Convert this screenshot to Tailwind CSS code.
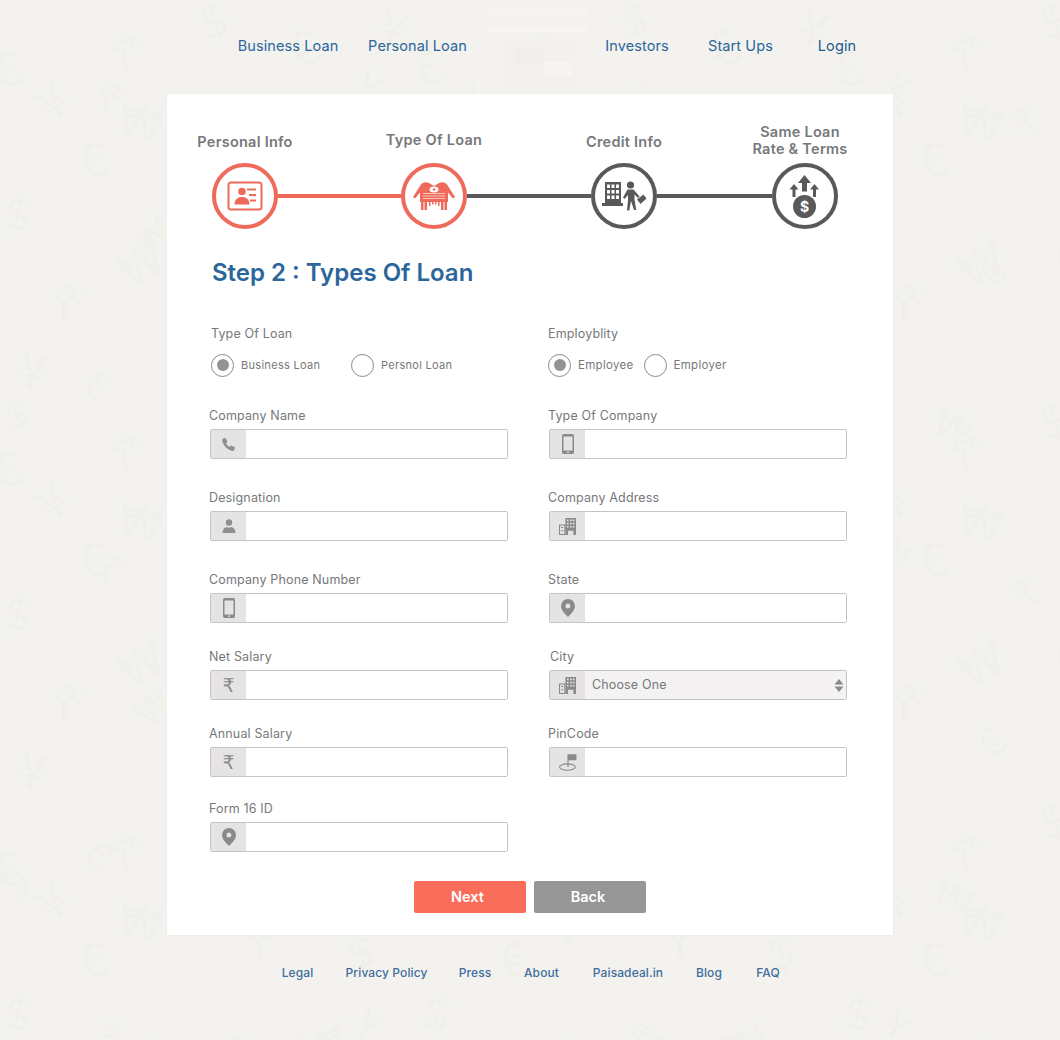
<!DOCTYPE html>
<html lang="en">
<head>
<meta charset="utf-8">
<title>Step 2 : Types Of Loan</title>
<script src="https://cdn.jsdelivr.net/npm/@tailwindcss/browser@4"></script>
</head>
<body class="relative h-[1040px] w-[1060px] overflow-hidden bg-[#f3f2ee] font-['Inter','Liberation_Sans',sans-serif] text-[#77787b]">

<svg class="absolute inset-0" width="1060" height="1040" aria-hidden="true">
  <defs>
    <pattern id="money" width="420" height="400" patternUnits="userSpaceOnUse">
      <g fill="#f0efea" font-family="DejaVu Sans" font-size="46">
        <text transform="translate(0,90) rotate(-20)">€</text>
        <text transform="translate(105,60) rotate(25)">₹</text>
        <text transform="translate(115,135) rotate(10)">₩</text>
        <text transform="translate(50,125) rotate(-35)">¥</text>
        <text transform="translate(0,225) rotate(15)">$</text>
        <text transform="translate(85,180) rotate(-15)">€</text>
        <text transform="translate(45,310) rotate(30)">₹</text>
        <text transform="translate(130,290) rotate(-30)">₩</text>
        <text transform="translate(15,385) rotate(12)">¥</text>
        <text transform="translate(205,40) rotate(-18)">$</text>
        <text transform="translate(240,150) rotate(22)">₹</text>
        <text transform="translate(300,70) rotate(-28)">€</text>
        <text transform="translate(375,40) rotate(16)">¥</text>
        <text transform="translate(350,170) rotate(-12)">$</text>
        <text transform="translate(210,260) rotate(30)">€</text>
        <text transform="translate(310,270) rotate(-22)">₩</text>
        <text transform="translate(385,310) rotate(18)">€</text>
        <text transform="translate(225,370) rotate(-10)">$</text>
        <text transform="translate(320,385) rotate(26)">¥</text>
      </g>
    </pattern>
    <pattern id="money2" x="60" y="30" width="530" height="470" patternUnits="userSpaceOnUse">
      <g fill="#f0efea" font-family="DejaVu Sans" font-size="38">
        <text transform="translate(30,70) rotate(40)">₹</text>
        <text transform="translate(160,100) rotate(-40)">$</text>
        <text transform="translate(290,60) rotate(35)">¥</text>
        <text transform="translate(430,110) rotate(-25)">₹</text>
        <text transform="translate(90,230) rotate(-45)">₩</text>
        <text transform="translate(265,215) rotate(40)">$</text>
        <text transform="translate(400,260) rotate(-35)">€</text>
        <text transform="translate(20,360) rotate(35)">€</text>
        <text transform="translate(180,350) rotate(-30)">₹</text>
        <text transform="translate(340,400) rotate(30)">₩</text>
        <text transform="translate(480,400) rotate(-20)">$</text>
      </g>
    </pattern>
  </defs>
  <rect width="1060" height="1040" fill="url(#money)"/>
  <rect width="1060" height="1040" fill="url(#money2)"/>
  <g>
    <rect x="488" y="9" width="100" height="6" fill="#f5f4f1"/>
    <rect x="488" y="28" width="100" height="4" fill="#f6f5f2"/>
    <rect x="505" y="36" width="75" height="54" fill="#f2f1ed"/>
    <rect x="516" y="48" width="28" height="17" fill="#efeeea"/>
    <rect x="544" y="62" width="28" height="14" fill="#f6f5f1"/>
  </g>
</svg>

<div class="relative">
  <nav class="flex h-[94px] items-start pt-[37px] pl-[237px] text-[14.5px] leading-[18px] tracking-[0.1px] text-[#2b669b]">
    <a class="w-[102px] whitespace-nowrap text-center">Business Loan</a>
    <a class="ml-[28px] w-[101px] whitespace-nowrap text-center">Personal Loan</a>
    <a class="ml-[136px] w-[66px] whitespace-nowrap text-center">Investors</a>
    <a class="ml-[37px] w-[67px] whitespace-nowrap text-center">Start Ups</a>
    <a class="ml-[43px] w-[40px] whitespace-nowrap text-center text-[#1f5a8f]">Login</a>
  </nav>

  <main class="ml-[167px] h-[841px] w-[726px] bg-white pt-[29px] shadow-[0_0_0_1px_#efeeeb]">
    <div class="flex pl-[18px] text-center text-[14.5px] leading-[17px] font-semibold tracking-[0.25px] text-[#77787b]">
      <div class="flex h-[36px] w-[120px] items-center justify-center">Personal Info</div>
      <div class="ml-[69px] -mt-[2px] flex h-[36px] w-[120px] items-center justify-center">Type Of Loan</div>
      <div class="ml-[70px] flex h-[36px] w-[120px] items-center justify-center">Credit Info</div>
      <div class="ml-[56px] -mt-[1px] flex h-[36px] w-[120px] items-center justify-center">Same Loan<br>Rate &amp; Terms</div>
    </div>

    <div class="mt-[4px] flex items-center pl-[45px]">
      <svg width="66" height="66" viewBox="0 0 66 66" class="shrink-0">
        <circle cx="33" cy="33" r="31" fill="#fff" stroke="#ee6a5a" stroke-width="4"/>
        <rect x="16.500" y="19.500" width="33" height="27" rx="2.500" fill="none" stroke="#ee6a5a" stroke-width="2"/>
        <circle cx="30" cy="28.500" r="3.800" fill="#ee6a5a"/>
        <path d="M22.500 41.500c0-5 3-7.500 7.500-7.500s7.500 2.500 7.500 7.500z" fill="#ee6a5a"/>
        <path d="M35 26.500h9M37 32h7M38 37.500h6" stroke="#ee6a5a" stroke-width="2"/>
      </svg>
      <div class="h-[4px] w-[123px] bg-[#ee6a5a]"></div>
      <svg width="66" height="66" viewBox="0 0 66 66" class="shrink-0">
        <circle cx="33" cy="33" r="31" fill="#fff" stroke="#ee6a5a" stroke-width="4"/>
        <path d="M12 34 20 21.500Q23 18 28 20L33 23 38 20Q43 18 46 21.500L54 34 52 35.500 47 29.500V39H19V29.500L14 35.500z" fill="#ee6a5a"/>
        <path d="M20 38h2.500v9H20zM23.500 38H26v9h-2.500zM28 38h1.500v5H28zM31 38h1.500v3.500H31zM34 38h1.500v3.500H34zM37 38h1.500v5H37zM40 38h2.500v9H40zM43.500 38H46v9h-2.500z" fill="#ee6a5a"/>
        <path d="M22 30.500h22M22 33h22M22 35.500h22" stroke="#fbc4bb" stroke-width="1.100"/>
        <ellipse cx="33" cy="26.500" rx="4.500" ry="3" fill="#fff"/>
        <circle cx="33" cy="26.500" r="1.300" fill="#ee6a5a"/>
      </svg>
      <div class="h-[4px] w-[124px] bg-[#58595b]"></div>
      <svg width="66" height="66" viewBox="0 0 66 66" class="shrink-0">
        <circle cx="33" cy="33" r="31" fill="#fff" stroke="#58595b" stroke-width="4"/>
        <path d="M14 19h16v21h2v3H11v-3h3z" fill="#58595b"/>
        <path d="M16 21.500h3v3.500h-3zM20.500 21.500h3v3.500h-3zM25 21.500h3v3.500h-3zM16 27h3v3.500h-3zM20.500 27h3v3.500h-3zM25 27h3v3.500h-3zM16 32.500h3v3.500h-3zM20.500 32.500h3v3.500h-3zM25 32.500h3v3.500h-3z" fill="#fff"/>
        <circle cx="39.500" cy="22" r="3.600" fill="#58595b"/>
        <path d="M36.500 26.500h6l6 7-1.500 1.500-3.500-3.500v5l1.800 10.500h-2.300L40 38l-1.700 9.500H36l1-10.500v-5l-3.500 4-1.500-1.500z" fill="#58595b"/>
        <path d="m46 36.500 6.500-5 3 4-6 5.500z" fill="#58595b"/>
      </svg>
      <div class="h-[4px] w-[115px] bg-[#58595b]"></div>
      <svg width="66" height="66" viewBox="0 0 66 66" class="shrink-0">
        <circle cx="33" cy="33" r="31" fill="#fff" stroke="#58595b" stroke-width="4"/>
        <path d="M32.500 12l6.500 8h-4v8.500h-5V20h-4zM22 21l4.500 5.500h-3V34h-3v-7.500h-3zM42.500 21l4.500 5.500h-3V34h-3v-7.500h-3z" fill="#58595b"/>
        <circle cx="32.500" cy="43.500" r="11.500" fill="#58595b"/>
        <text x="32.500" y="48.500" text-anchor="middle" font-size="14" font-weight="700" fill="#fff">$</text>
      </svg>
    </div>

    <div class="pl-[42px]">
      <h1 class="mt-[28px] ml-[3px] h-[32px] text-[24px] leading-[32px] font-semibold text-[#2b669b]">Step 2 : Types Of Loan</h1>

      <div class="mt-[35px] grid grid-cols-[339px_1fr]">
        <div class="pl-[2px]">
          <div class="h-[20px] text-[12.500px] leading-[20px] tracking-[0.15px]">Type Of Loan</div>
          <div class="mt-[9px] flex h-[24px] items-center text-[11px] tracking-[0.3px]">
            <span class="flex h-[23px] w-[23px] items-center justify-center rounded-full border-[1.500px] border-[#8a8a8a]"><span class="h-[12px] w-[12px] rounded-full bg-[#939393]"></span></span>
            <span class="ml-[7px] w-[80px] whitespace-nowrap">Business Loan</span>
            <span class="ml-[30px] h-[23px] w-[23px] rounded-full border-[1.500px] border-[#8a8a8a]"></span>
            <span class="ml-[7px] whitespace-nowrap">Persnol Loan</span>
          </div>
        </div>
        <div>
          <div class="h-[20px] text-[12.500px] leading-[20px] tracking-[0.15px]">Employblity</div>
          <div class="mt-[9px] flex h-[24px] items-center text-[11.500px] tracking-[0.3px]">
            <span class="flex h-[23px] w-[23px] items-center justify-center rounded-full border-[1.500px] border-[#8a8a8a]"><span class="h-[12px] w-[12px] rounded-full bg-[#939393]"></span></span>
            <span class="ml-[7px] pt-[2px]">Employee</span>
            <span class="ml-[10px] h-[23px] w-[23px] rounded-full border-[1.500px] border-[#8a8a8a]"></span>
            <span class="ml-[7px] pt-[2px]">Employer</span>
          </div>
        </div>
      </div>

      <!-- Row 1 -->
      <div class="mt-[28px] grid grid-cols-[339px_1fr] text-[12.500px] leading-[22px] tracking-[0.15px]">
        <div>
          <label class="block h-[20px]">Company Name</label>
          <div class="mt-[4px] ml-[1px] flex h-[30px] w-[298px] overflow-hidden rounded-[2px] border border-[#c4c4c4]">
            <span class="flex w-[35px] shrink-0 items-center justify-center bg-[#e5e3e3]">
              <svg width="15" height="15" viewBox="0 0 14 14"><path d="M2 1.500 4.500 1 6 4.500 4.800 5.800c.6 1.500 1.800 2.800 3.300 3.400L9.500 8l3.500 1.600-.5 2.400c-.3.800-1.500 1.200-2.700.8C5.500 11.500 2.500 8.200 1.300 4c-.3-1 .1-2 .7-2.500z" fill="#8f8f8f"/></svg>
            </span>
            <input class="min-w-0 flex-1 bg-white" type="text" aria-label="Company Name">
          </div>
        </div>
        <div>
          <label class="block h-[20px]">Type Of Company</label>
          <div class="mt-[4px] ml-[1px] flex h-[30px] w-[298px] overflow-hidden rounded-[2px] border border-[#c4c4c4]">
            <span class="flex w-[35px] shrink-0 items-center justify-center bg-[#e5e3e3]">
              <svg width="12" height="20" viewBox="0 0 12 20"><path fill-rule="evenodd" d="M2 0h8a2 2 0 0 1 2 2v16a2 2 0 0 1-2 2H2a2 2 0 0 1-2-2V2a2 2 0 0 1 2-2zm-.5 2.500v14h9v-14z" fill="#8a8a8a"/><circle cx="6" cy="18.200" r=".9" fill="#e5e3e3"/></svg>
            </span>
            <input class="min-w-0 flex-1 bg-white" type="text" aria-label="Type Of Company">
          </div>
        </div>
      </div>

      <!-- Row 2 -->
      <div class="mt-[28px] grid grid-cols-[339px_1fr] text-[12.500px] leading-[22px] tracking-[0.15px]">
        <div>
          <label class="block h-[20px]">Designation</label>
          <div class="mt-[4px] ml-[1px] flex h-[30px] w-[298px] overflow-hidden rounded-[2px] border border-[#c4c4c4]">
            <span class="flex w-[35px] shrink-0 items-center justify-center bg-[#e5e3e3]">
              <svg width="14" height="14" viewBox="0 0 14 14"><circle cx="7" cy="3.500" r="3.200" fill="#8f8f8f"/><path d="M0.500 14c0-3.500 1.800-5.500 4-6 1.500.8 3.500.8 5 0 2.200.5 4 2.500 4 6z" fill="#8f8f8f"/></svg>
            </span>
            <input class="min-w-0 flex-1 bg-white" type="text" aria-label="Designation">
          </div>
        </div>
        <div>
          <label class="block h-[20px]">Company Address</label>
          <div class="mt-[4px] ml-[1px] flex h-[30px] w-[298px] overflow-hidden rounded-[2px] border border-[#c4c4c4]">
            <span class="flex w-[35px] shrink-0 items-center justify-center bg-[#e5e3e3]">
              <svg width="17" height="17" viewBox="0 0 16 16"><path d="M6 0h10v16H6z" fill="#8a8a8a"/><path d="M7.500 1.500h1.500v1.500H7.500zM10.500 1.500H12v1.500h-1.500zM13 1.500h1.500v1.500H13zM7.500 4.500h1.500V6H7.500zM10.500 4.500H12V6h-1.500zM13 4.500h1.500V6H13zM7.500 7.500h1.500V9H7.500zM10.500 7.500H12V9h-1.500zM13 7.500h1.500V9H13zM8.500 12h5v4h-5z" fill="#e5e3e3"/><path d="M.5 6.500h5v9h-5z" fill="none" stroke="#8a8a8a"/><path d="M2 9h2M2 12h2" stroke="#8a8a8a"/></svg>
            </span>
            <input class="min-w-0 flex-1 bg-white" type="text" aria-label="Company Address">
          </div>
        </div>
      </div>

      <!-- Row 3 -->
      <div class="mt-[28px] grid grid-cols-[339px_1fr] text-[12.500px] leading-[22px] tracking-[0.15px]">
        <div>
          <label class="block h-[20px]">Company Phone Number</label>
          <div class="mt-[4px] ml-[1px] flex h-[30px] w-[298px] overflow-hidden rounded-[2px] border border-[#c4c4c4]">
            <span class="flex w-[35px] shrink-0 items-center justify-center bg-[#e5e3e3]">
              <svg width="12" height="20" viewBox="0 0 12 20"><path fill-rule="evenodd" d="M2 0h8a2 2 0 0 1 2 2v16a2 2 0 0 1-2 2H2a2 2 0 0 1-2-2V2a2 2 0 0 1 2-2zm-.5 2.500v14h9v-14z" fill="#8a8a8a"/><circle cx="6" cy="18.200" r=".9" fill="#e5e3e3"/></svg>
            </span>
            <input class="min-w-0 flex-1 bg-white" type="text" aria-label="Company Phone Number">
          </div>
        </div>
        <div>
          <label class="block h-[20px]">State</label>
          <div class="mt-[4px] ml-[1px] flex h-[30px] w-[298px] overflow-hidden rounded-[2px] border border-[#c4c4c4]">
            <span class="flex w-[35px] shrink-0 items-center justify-center bg-[#e5e3e3]">
              <svg width="14" height="18" viewBox="0 0 14 18"><path fill-rule="evenodd" d="M7 0a7 7 0 0 1 7 7c0 4-4 8-7 11-3-3-7-7-7-11a7 7 0 0 1 7-7zm0 4.500a2.500 2.500 0 1 0 0 5 2.500 2.500 0 0 0 0-5z" fill="#8a8a8a"/></svg>
            </span>
            <input class="min-w-0 flex-1 bg-white" type="text" aria-label="State">
          </div>
        </div>
      </div>

      <!-- Row 4 -->
      <div class="mt-[23px] grid grid-cols-[339px_1fr] text-[12.500px] leading-[22px] tracking-[0.15px]">
        <div>
          <label class="block h-[20px]">Net Salary</label>
          <div class="mt-[4px] ml-[1px] flex h-[30px] w-[298px] overflow-hidden rounded-[2px] border border-[#c4c4c4]">
            <span class="flex w-[35px] shrink-0 items-center justify-center bg-[#e5e3e3] font-['DejaVu_Sans',sans-serif] text-[19px] leading-none text-[#8a8a8a]">₹</span>
            <input class="min-w-0 flex-1 bg-white" type="text" aria-label="Net Salary">
          </div>
        </div>
        <div>
          <label class="block h-[20px] pl-[2px]">City</label>
          <div class="relative mt-[4px] ml-[1px] flex h-[30px] w-[298px] overflow-hidden rounded-[2px] border border-[#c4c4c4]">
            <span class="flex w-[35px] shrink-0 items-center justify-center bg-[#e5e3e3]">
              <svg width="17" height="17" viewBox="0 0 16 16"><path d="M6 0h10v16H6z" fill="#8a8a8a"/><path d="M7.500 1.500h1.500v1.500H7.500zM10.500 1.500H12v1.500h-1.500zM13 1.500h1.500v1.500H13zM7.500 4.500h1.500V6H7.500zM10.500 4.500H12V6h-1.500zM13 4.500h1.500V6H13zM7.500 7.500h1.500V9H7.500zM10.500 7.500H12V9h-1.500zM13 7.500h1.500V9H13zM8.500 12h5v4h-5z" fill="#e5e3e3"/><path d="M.5 6.500h5v9h-5z" fill="none" stroke="#8a8a8a"/><path d="M2 9h2M2 12h2" stroke="#8a8a8a"/></svg>
            </span>
            <select class="min-w-0 flex-1 appearance-none bg-[#f4f2f2] pl-[7px] text-[#77787b]" aria-label="City"><option>Choose One</option></select>
            <svg class="absolute top-[8px] right-[2px]" width="10" height="13" viewBox="0 0 10 13"><path d="M5 0l4.500 5.500h-9zM5 13 .5 7.500h9z" fill="#8a8a8a"/></svg>
          </div>
        </div>
      </div>

      <!-- Row 5 -->
      <div class="mt-[23px] grid grid-cols-[339px_1fr] text-[12.500px] leading-[22px] tracking-[0.15px]">
        <div>
          <label class="block h-[20px]">Annual Salary</label>
          <div class="mt-[4px] ml-[1px] flex h-[30px] w-[298px] overflow-hidden rounded-[2px] border border-[#c4c4c4]">
            <span class="flex w-[35px] shrink-0 items-center justify-center bg-[#e5e3e3] font-['DejaVu_Sans',sans-serif] text-[19px] leading-none text-[#8a8a8a]">₹</span>
            <input class="min-w-0 flex-1 bg-white" type="text" aria-label="Annual Salary">
          </div>
        </div>
        <div>
          <label class="block h-[20px]">PinCode</label>
          <div class="mt-[4px] ml-[1px] flex h-[30px] w-[298px] overflow-hidden rounded-[2px] border border-[#c4c4c4]">
            <span class="flex w-[35px] shrink-0 items-center justify-center bg-[#e5e3e3]">
              <svg width="18" height="18" viewBox="0 0 16 16"><path d="M7.500 1h8v5.500h-7v6h-1z" fill="#8a8a8a"/><ellipse cx="7.500" cy="12.500" rx="7" ry="2.800" fill="none" stroke="#8a8a8a"/></svg>
            </span>
            <input class="min-w-0 flex-1 bg-white" type="text" aria-label="PinCode">
          </div>
        </div>
      </div>

      <!-- Row 6 -->
      <div class="mt-[21px] text-[12.500px] leading-[22px] tracking-[0.15px]">
        <label class="block h-[20px]">Form 16 ID</label>
        <div class="mt-[4px] ml-[1px] flex h-[30px] w-[298px] overflow-hidden rounded-[2px] border border-[#c4c4c4]">
          <span class="flex w-[35px] shrink-0 items-center justify-center bg-[#e5e3e3]">
            <svg width="14" height="18" viewBox="0 0 14 18"><path fill-rule="evenodd" d="M7 0a7 7 0 0 1 7 7c0 4-4 8-7 11-3-3-7-7-7-11a7 7 0 0 1 7-7zm0 4.500a2.500 2.500 0 1 0 0 5 2.500 2.500 0 0 0 0-5z" fill="#8a8a8a"/></svg>
          </span>
          <input class="min-w-0 flex-1 bg-white" type="text" aria-label="Form 16 ID">
        </div>
      </div>

      <div class="mt-[29px] ml-[205px] flex gap-[8px] text-[14.500px] font-semibold text-white">
        <button class="h-[32px] w-[112px] rounded-[2px] bg-[#f96e5b] pr-[5px]">Next</button>
        <button class="h-[32px] w-[112px] rounded-[2px] bg-[#969696] pr-[4px]">Back</button>
      </div>
    </div>
  </main>

  <footer class="mt-[29px] flex pl-[280px] text-[12px] leading-[18px] font-medium tracking-[0.1px] text-[#3f6d9e]">
    <a class="w-[35px] whitespace-nowrap text-center">Legal</a>
    <a class="ml-[29px] w-[85px] whitespace-nowrap text-center">Privacy Policy</a>
    <a class="ml-[29px] w-[34px] whitespace-nowrap text-center">Press</a>
    <a class="ml-[30px] w-[39px] whitespace-nowrap text-center">About</a>
    <a class="ml-[31px] w-[72px] whitespace-nowrap text-center">Paisadeal.in</a>
    <a class="ml-[31px] w-[28px] whitespace-nowrap text-center">Blog</a>
    <a class="ml-[32px] w-[26px] whitespace-nowrap text-center">FAQ</a>
  </footer>
</div>
</body>
</html>
